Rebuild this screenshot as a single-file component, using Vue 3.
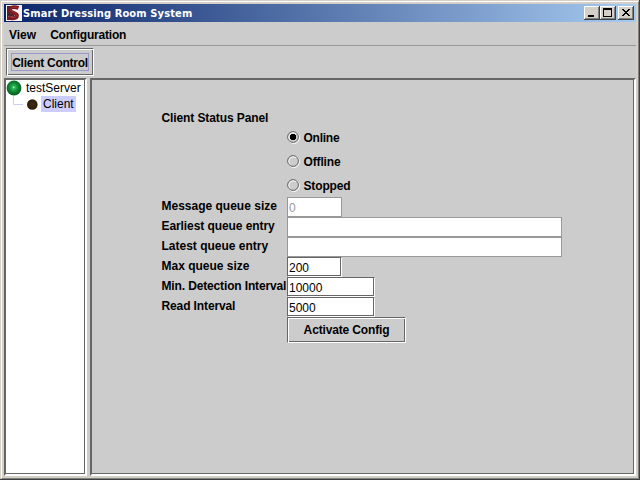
<script setup>
import { ref } from 'vue'

const status = ref('Online')
const states = ['Online', 'Offline', 'Stopped']
const fields = [
  { label: 'Message queue size', value: '0', kind: 'disabled small', cls: 'l1' },
  { label: 'Earliest queue entry', value: '', kind: 'disabled wide', cls: 'l2' },
  { label: 'Latest queue entry', value: '', kind: 'disabled wide', cls: 'l3' },
  { label: 'Max queue size', value: '200', kind: 'small', cls: 'l4' },
  { label: 'Min. Detection Interval', value: '10000', kind: 'medium', cls: 'l5' },
  { label: 'Read Interval', value: '5000', kind: 'medium', cls: 'l6' },
]
</script>

<template>
  <div class="window">
    <div class="inner">
      <header class="title">
        <svg class="logo" width="16" height="16" viewBox="0 0 16 16">
          <rect width="16" height="16" fill="#f8f2f2" />
          <path d="M1 1H6L3 5L5 9H8L9 12L2 11L4 15H1Z" fill="#4a2428" />
          <path d="M12.5 3C8.5 1.3 4 2 4 5C4 8.2 11 7.3 11 10.5C11 13.6 6 14 2 12.5" fill="none" stroke="#7c1820" stroke-width="3.8" />
          <path d="M11.5 2.6C8 1.4 4.8 2.6 4.6 4.8C4.6 7.2 10.6 7 10.6 10.2C10.6 12.2 8 13 5 12.6" fill="none" stroke="#a13038" stroke-width="1" />
        </svg>
        <span class="title-text">Smart Dressing Room System</span>
        <div class="controls">
          <button class="ctl"><svg width="16" height="14" shape-rendering="crispEdges"><path d="M4 9h6v2H4z" /></svg></button>
          <button class="ctl"><svg width="16" height="14" shape-rendering="crispEdges"><path d="M3 2h9v9H3zM4 4v6h7V4z" fill-rule="evenodd" /></svg></button>
          <button class="ctl close"><svg width="16" height="14" shape-rendering="crispEdges"><path d="M4 3h2v1h1v1h2V4h1V3h2v1h-1v1h-1v1H9v1h1v1h1v1h1v1h-2V9H9V8H7v1H6v1H4V9h1V8h1V7h1V6H6V5H5V4H4z" /></svg></button>
        </div>
      </header>
      <nav class="menu"><span class="m1">View</span><span class="m2">Configuration</span></nav>
      <div class="toolbar"><button class="tool"><span class="focus"><span>Client Control</span></span></button></div>
      <main class="split">
        <aside class="pane tree">
          <div class="node root">
            <svg width="16" height="16">
              <defs><radialGradient id="green" cx=".48" cy=".46" r=".55"><stop offset="0" stop-color="#c8ffd8" /><stop offset=".16" stop-color="#32b95b" /><stop offset=".5" stop-color="#109038" /><stop offset="1" stop-color="#06551c" /></radialGradient></defs>
              <circle cx="8" cy="8" r="7.4" fill="url(#green)" />
            </svg>
            <span>testServer</span>
          </div>
          <div class="node child">
            <svg width="34" height="16">
              <path d="M7.5 0v8.5H17" fill="none" stroke="#ccccee" />
              <circle cx="26.3" cy="8.5" r="5.3" fill="#30200c" /><circle cx="26.3" cy="8.5" r="3" fill="#3b280e" />
            </svg>
            <span class="selected">Client</span>
          </div>
        </aside>
        <section class="pane panel">
          <div class="heading"><span>Client Status Panel</span></div>
          <div class="radios">
            <label v-for="s in states" :key="s" class="radio" @click="status = s">
              <svg width="13" height="13" viewBox="0 0 13 13">
                <circle cx="6.8" cy="6.8" r="5.6" fill="none" stroke="#fff" />
                <circle cx="6" cy="6" r="5.4" fill="#ccc" stroke="#666" />
                <path d="M2.9 9.1A4.4 4.4 0 0 1 9.1 2.9" fill="none" stroke="#fff" stroke-width=".8" />
                <path v-if="status === s" d="M4 3h4v1h1v4H8v1H4V8H3V4h1z" fill="#000" />
              </svg>
              <span :class="s.toLowerCase()">{{ s }}</span>
            </label>
          </div>
          <div v-for="f in fields" :key="f.label" class="row">
            <span class="label"><span :class="f.cls">{{ f.label }}</span></span>
            <span class="field" :class="f.kind">{{ f.value }}</span>
          </div>
          <button class="activate"><span>Activate Config</span></button>
        </section>
      </main>
    </div>
  </div>
</template>

<style>
body { margin: 0; overflow: hidden; }
</style>
<style scoped>
* { box-sizing: border-box; }
button { font: inherit; padding: 0; margin: 0; border: 0; color: #000; }
svg { display: block; flex: none; }
.window { width: 640px; height: 480px; background: #d4d0c8; border-right: 1px solid #404040; border-bottom: 1px solid #404040; padding: 1px 0 0 1px; font: bold 12px/14px "Liberation Sans", Arial, sans-serif; color: #000; white-space: nowrap; }
.inner { height: 478px; border: 1px solid #fff; border-right-color: #808080; border-bottom-color: #808080; padding: 2px; display: flex; flex-direction: column; }
.title { height: 18px; flex: none; display: flex; align-items: center; padding: 0 2px; background: linear-gradient(90deg, #0a246a, #a6caf0); color: #fff; }
.title-text { font: bold 11px/16px "DejaVu Sans Condensed", "DejaVu Sans", sans-serif; margin-left: 1px; letter-spacing: .13px; padding-top: 1px; }
.controls { margin-left: auto; display: flex; }
.ctl { width: 16px; height: 14px; background: #d4d0c8; box-shadow: inset -1px -1px #404040, inset 1px 1px #fff, inset -2px -2px #808080; }
.close { margin-left: 2px; }
.menu { height: 24px; flex: none; background: #ccc; border-bottom: 1px solid #999; padding: 6px 5px 0; display: flex; gap: 14px; }
.m2 { letter-spacing: -.2px; }
.toolbar { height: 32px; flex: none; background: #ccc; padding: 2px; }
.tool { width: 88px; height: 28px; display: block; background: #ccc; border: 1px solid #666; box-shadow: inset 1px 1px #fff, inset -1px -1px #666; border-right-color: #fff; border-bottom-color: #fff; padding: 4px; letter-spacing: -.27px; }
.focus { display: block; height: 18px; border: 1px solid #9999cc; line-height: 18px; }
.split { height: 398px; display: flex; gap: 3px; background: #ccc; }
.pane { border: 2px solid #666; border-right-color: #fff; border-bottom-color: #fff; box-shadow: inset -1px -1px #666; }
.tree { width: 83px; background: #fff; font-weight: normal; }
.node { height: 16px; display: flex; align-items: center; }
.root { gap: 4px; }
.child { gap: 1px; }
.selected { background: #ccccff; height: 16px; line-height: 17px; padding: 0 2px; width: 35px; }
.panel { width: 546px; background: #ccc; padding: 31px 0 0 69.5px; }
.heading { height: 14px; letter-spacing: -.1px; }
.radios { margin: 0 0 0 125.5px; height: 72px; }
.radio { height: 24px; display: flex; align-items: center; gap: 3.5px; }
.radio span { padding-top: 1px; }
.online { letter-spacing: -.25px; }
.offline { letter-spacing: -.15px; }
.stopped { letter-spacing: -.15px; }
.row { height: 20px; display: flex; }
.label { width: 125.5px; padding-top: 2px; }
.l2 { letter-spacing: -.08px; }
.l5 { letter-spacing: -.14px; }
.l6 { letter-spacing: -.12px; }
.field { height: 20px; background: #fff; border: 1px solid #666; font-weight: normal; padding: 3px 1px 0; }
.field:not(.disabled) { border-right-color: #fff; border-bottom-color: #fff; box-shadow: inset -1px -1px #666; }
.disabled { border-color: #999; color: #999; }
.small { width: 55px; }
.medium { width: 88px; }
.wide { width: 275px; }
.activate { display: block; margin: 0 0 0 125.5px; width: 119px; height: 26px; background: #ccc; border: 1px solid #666; box-shadow: inset 1px 1px #fff, inset -1px -1px #666; border-right-color: #fff; border-bottom-color: #fff; letter-spacing: -.15px; }
</style>
